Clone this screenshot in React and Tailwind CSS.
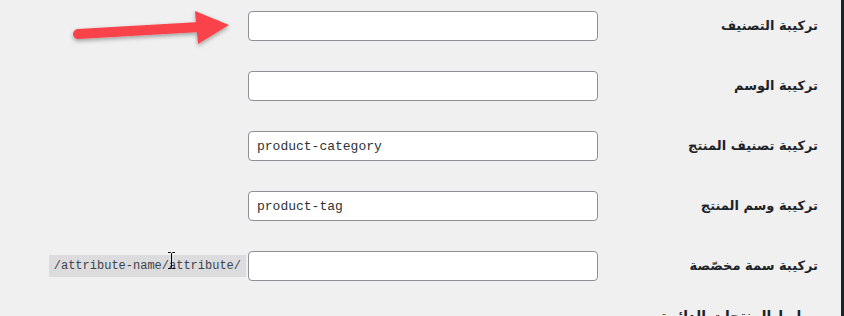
import React from "react";

const rows = [
  { label: "تركيبة التصنيف", value: "" },
  { label: "تركيبة الوسم", value: "" },
  { label: "تركيبة تصنيف المنتج", value: "product-category" },
  { label: "تركيبة وسم المنتج", value: "product-tag" },
  { label: "تركيبة سمة مخصّصة", value: "", code: "/attribute-name/attribute/" },
];

export default function App() {
  return (
    <div className="relative flex h-[316px] w-[844px] overflow-hidden bg-[#f0f0f1]" dir="rtl">
      <div className="h-full w-[3px] shrink-0 bg-[#1d2327]" />
      <div className="flex flex-1 flex-col pr-[23px] pt-[11px] text-[#1d2327]" style={{ fontFamily: "'DejaVu Sans', sans-serif" }}>
        {rows.map((r, i) => (
          <div key={i} className="flex h-[60px] shrink-0 items-start">
            <div className="flex h-[30px] w-[220px] shrink-0 items-center text-[13px] font-semibold">
              {r.label}
            </div>
            <input
              dir="ltr"
              readOnly
              value={r.value}
              className="h-[30px] w-[350px] shrink-0 rounded-[4px] border border-[#8c8f94] bg-white px-[8px] text-[13px] text-[#2c3338] outline-none"
              style={{ fontFamily: "'Liberation Mono', monospace" }}
            />
            {r.code && (
              <code
                dir="ltr"
                className="mr-[2px] mt-[4px] bg-[#dcdcde] px-[5px] py-[1px] text-[12px] leading-[20px] text-[#3c434a]"
                style={{ fontFamily: "'Liberation Mono', monospace" }}
              >
                {r.code}
              </code>
            )}
          </div>
        ))}
        <div className="mt-[-5px] shrink-0 text-[14px] font-semibold">روابط المنتجات الدائمة</div>
      </div>

      {/* red arrow */}
      <svg className="pointer-events-none absolute left-0 top-0" width="260" height="60" viewBox="0 0 260 60">
        <defs>
          <filter id="sh" x="-20%" y="-50%" width="140%" height="200%">
            <feDropShadow dx="0" dy="2" stdDeviation="2" floodColor="#000" floodOpacity="0.35" />
          </filter>
        </defs>
        <g filter="url(#sh)">
          <line x1="78" y1="34" x2="200" y2="27" stroke="#f9434a" strokeWidth="10" strokeLinecap="round" />
          <polygon points="195,11 229,25 198,44" fill="#f9434a" />
        </g>
      </svg>

      {/* I-beam cursor */}
      <svg className="pointer-events-none absolute left-[167px] top-[252px]" width="9" height="17" viewBox="0 0 9 17">
        <path d="M1 0.5h2.5l1 1 1-1H8M4.5 1.5v14M1 16.5h2.5l1-1 1 1H8" stroke="#000" strokeWidth="1" fill="none" />
      </svg>
    </div>
  );
}
